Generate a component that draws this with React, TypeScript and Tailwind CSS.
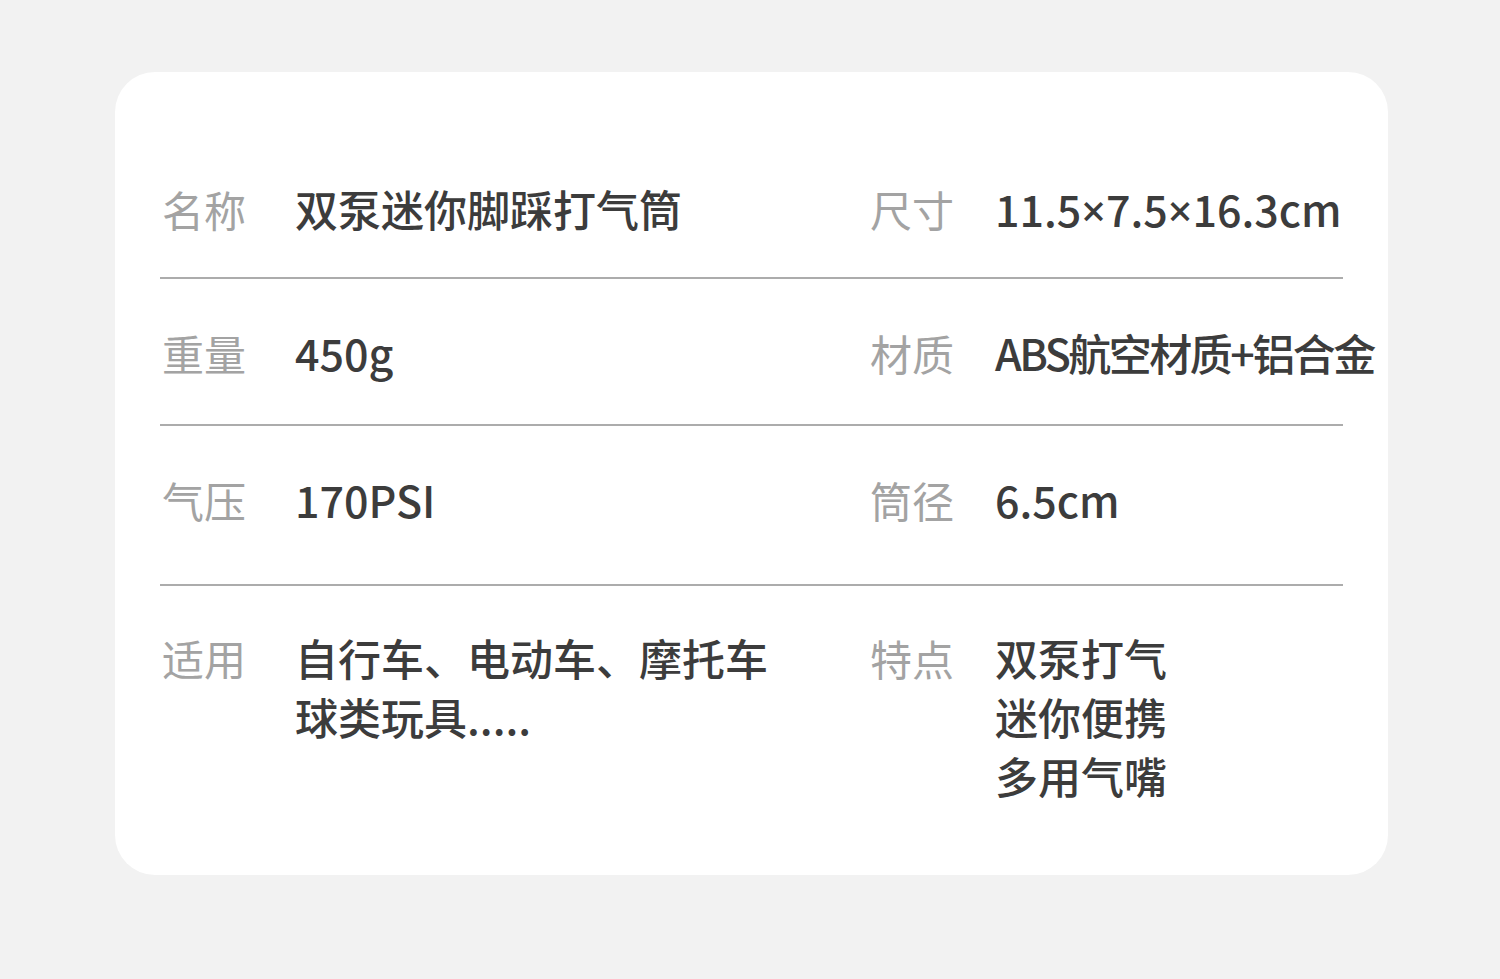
import React from 'react';

type Cell = { label: string; lines: string[]; tight?: boolean };

const rows: { left: Cell; right: Cell; pad: string }[] = [
    {
        left: { label: '名称', lines: ['双泵迷你脚踩打气筒'] },
        right: { label: '尺寸', lines: ['11.5×7.5×16.3cm'] },
        pad: 'pt-[107px] pb-[37px]',
    },
    {
        left: { label: '重量', lines: ['450g'] },
        right: { label: '材质', lines: ['ABS航空材质+铝合金'], tight: true },
        pad: 'pt-[44px] pb-[42px]',
    },
    {
        left: { label: '气压', lines: ['170PSI'] },
        right: { label: '筒径', lines: ['6.5cm'] },
        pad: 'pt-[44px] pb-[55px]',
    },
    {
        left: { label: '适用', lines: ['自行车、电动车、摩托车', '球类玩具.....'] },
        right: { label: '特点', lines: ['双泵打气', '迷你便携', '多用气嘴'] },
        pad: 'pt-[42px] pb-[60px]',
    },
];

// the multiplication sign is full width in the CJK face, so draw it from a latin one
const renderLine = (l: string) =>
    l.split('×').map((part, i) => (
        <React.Fragment key={i}>
            {i > 0 && <span style={{ fontFamily: '"Noto Sans", sans-serif' }}>×</span>}
            {part}
        </React.Fragment>
    ));

const SpecCell = ({ cell, labelW }: { cell: Cell; labelW: string }) => (
    <div className="flex items-start">
        <div className={`${labelW} shrink-0 text-[#a3a3a3] pl-[2px] text-[42px]`}>{cell.label}</div>
        <div className={`text-[#3c3c3c] font-medium whitespace-nowrap ${cell.tight ? 'tracking-[-2.5px]' : ''}`}>
            {cell.lines.map(l => (
                <div key={l}>{renderLine(l)}</div>
            ))}
        </div>
    </div>
);

export default function App() {
    return (
        <div
            className="w-[1500px] h-[979px] bg-[#f2f2f2] pt-[72px] pl-[115px]"
            style={{ fontFamily: '"Noto Sans CJK SC", "Noto Sans", sans-serif' }}
        >
            <div className="w-[1273px] h-[803px] bg-white rounded-[40px] px-[45px] text-[43px] leading-[59px]">
                {rows.map((row, i) => (
                    <div key={i}>
                        <div className={`grid grid-cols-[708px_1fr] ${row.pad}`}>
                            <SpecCell cell={row.left} labelW="w-[135px]" />
                            <SpecCell cell={row.right} labelW="w-[127px]" />
                        </div>
                        {i < rows.length - 1 && <div className="h-[2px] bg-[#acacac]" />}
                    </div>
                ))}
            </div>
        </div>
    );
}
